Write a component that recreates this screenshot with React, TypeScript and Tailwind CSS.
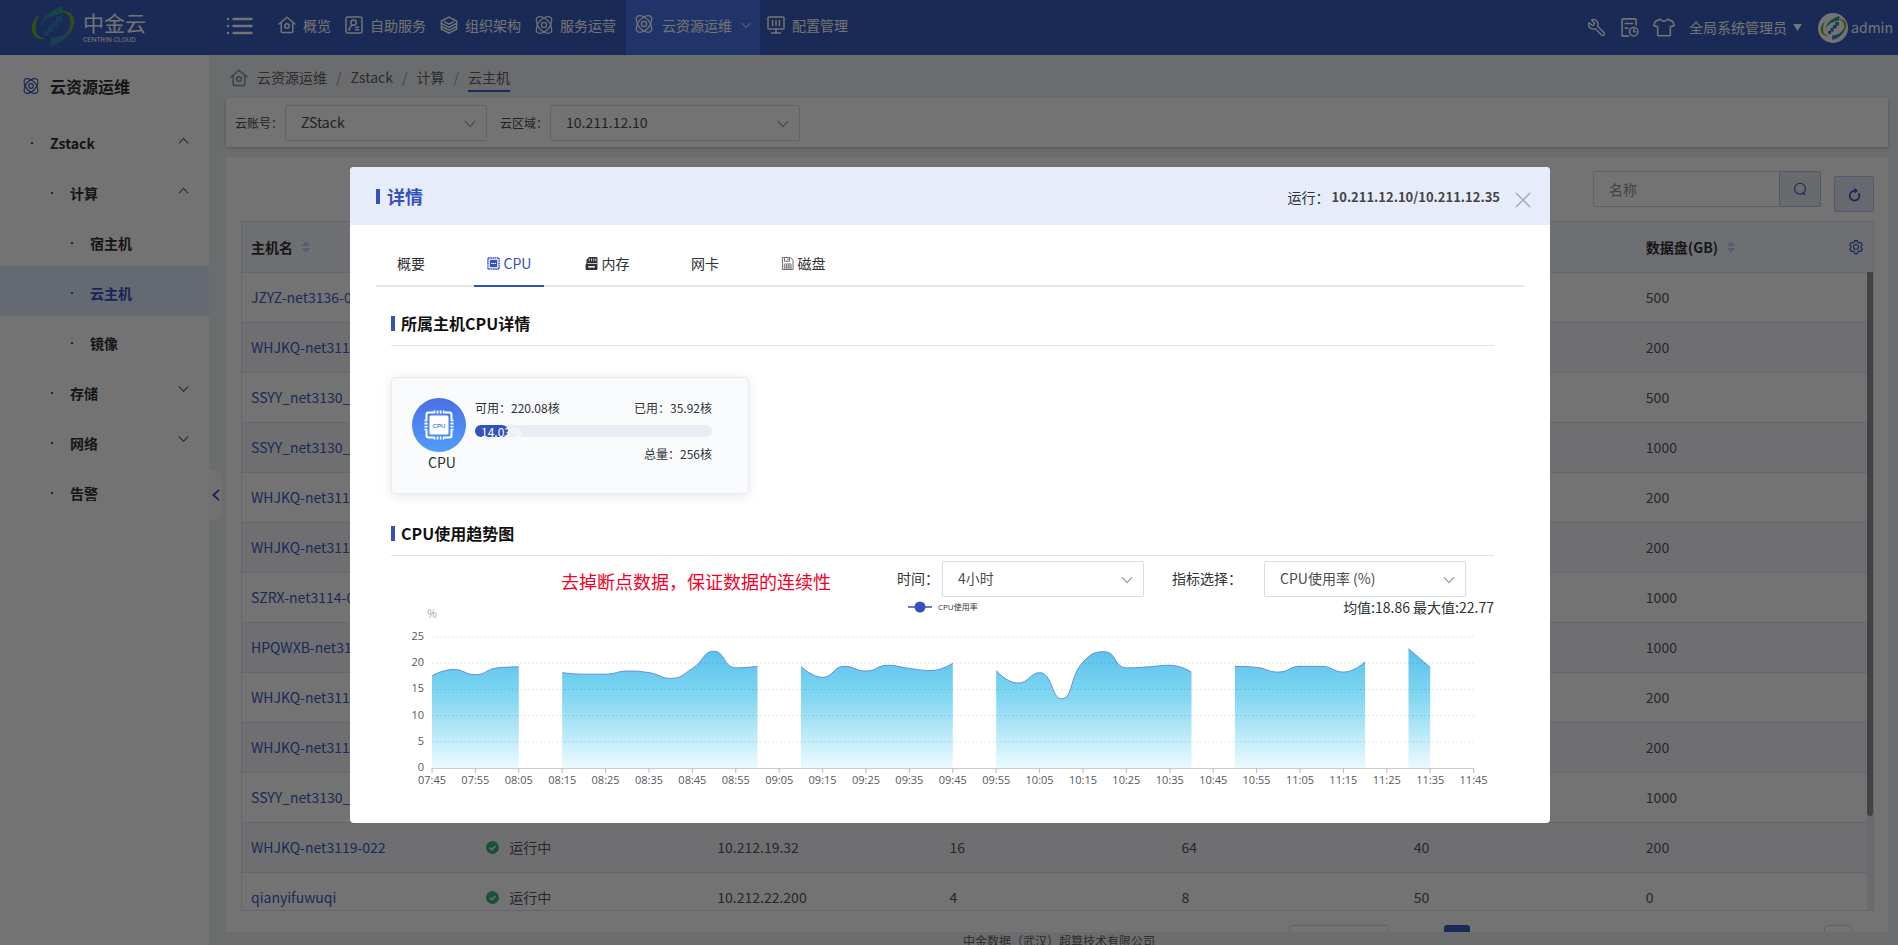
import type { ReactNode } from "react";
import { Wrench } from "lucide-react";

type IconProps = { className?: string };

function Stroke({ className, children, width = 1.5 }: IconProps & { children: ReactNode; width?: number }) {
  return (
    <svg
      viewBox="0 0 18 18"
      className={className}
      fill="none"
      stroke="currentColor"
      strokeWidth={width}
      strokeLinecap="round"
      strokeLinejoin="round"
      aria-hidden="true"
    >
      {children}
    </svg>
  );
}

const HomeIcon = ({ className }: IconProps) => (
  <Stroke className={className}>
    <path d="M1 8 9 1.2 17 8" />
    <path d="M3.2 6.6v9q0 .9.9.9h9.8q.9 0 .9-.9v-9" />
    <circle cx="9" cy="10" r="2.3" />
  </Stroke>
);

const UserCardIcon = ({ className }: IconProps) => (
  <Stroke className={className}>
    <rect x="1" y="1" width="16" height="16" rx="1.6" />
    <circle cx="8.6" cy="6.6" r="2.7" />
    <path d="M4 14.2c.3-2.4 1.7-4.2 3.4-4.8M10.6 11.2h3M10.6 13.8h3" />
  </Stroke>
);

const LayersIcon = ({ className }: IconProps) => (
  <Stroke className={className}>
    <path d="M9 1.2 16.6 5v2.4L9 11.4 1.4 7.4V5z" />
    <path d="M1.4 7.4v3L9 14.2l7.6-3.8v-3M1.4 10.4v2.8L9 17l7.6-3.8v-2.8" />
    <path d="M4.6 5.8 9 8.2l4.4-2.4" />
  </Stroke>
);

const AtomIcon = ({ className }: IconProps) => (
  <Stroke className={className} width={1.3}>
    <path d="M9 2C6.500.6 3.400.4 1.900 1.900S1.400 6.200 2.400 9c-1 2.800-2 5.600-.5 7.100S6.500 17.400 9 16c2.500 1.400 5.600 1.600 7.100.1s.5-4.300-.5-7.100c1-2.800 2-5.600.5-7.100S11.500.6 9 2z" />
    <path d="M9 2C6.200 3.400 3.600 6 2.400 9M15.600 9c-1.200 3-3.800 5.600-6.600 7M2.400 9c1.200 3 3.800 5.600 6.600 7M9 2c2.800 1.400 5.400 4 6.600 7" />
    <circle cx="9" cy="9" r="2.600" />
  </Stroke>
);

const BoardIcon = ({ className }: IconProps) => (
  <Stroke className={className}>
    <rect x="1" y="1" width="16" height="12" rx="1" />
    <path d="M5.600 4.600v5M9 4.600v5M12.400 4.600v5M9 13v4M4.600 17h8.800" />
  </Stroke>
);

const ChevronDown = ({ className }: IconProps) => (
  <svg viewBox="0 0 12 8" className={className} fill="none" stroke="currentColor" strokeWidth="1.2" aria-hidden="true">
    <path d="M1 1.200 6 6.600 11 1.200" />
  </svg>
);

const ChevronUp = ({ className }: IconProps) => (
  <svg viewBox="0 0 12 8" className={className} fill="none" stroke="currentColor" strokeWidth="1.2" aria-hidden="true">
    <path d="M1 6.600 6 1.200 11 6.600" />
  </svg>
);

const SortIcon = () => (
  <svg viewBox="0 0 10 14" className="h-[14px] w-[10px] text-[#c3d4f5]" fill="currentColor" aria-hidden="true">
    <path d="M5 1 9.500 6h-9zM5 13 .500 8h9z" />
  </svg>
);

const LogoMark = ({ className }: IconProps) => (
  <svg viewBox="0 0 44 40" className={className} aria-hidden="true">
    <path d="M32 0C22 3 11 9 8 23c4-9 11-14 23-15z" fill="#2f9c9c" />
    <path d="M9 8C1 14-1 22 2 28c2 4 7 6 13 5C9 32 5 29 5 24 4 18 6 12 9 8z" fill="#6fb52c" />
    <path d="M20 40c11-3 18-9 20-21-4 8-10 13-20 13z" fill="#2f93a8" />
    <path d="M25 5c7-1 14 0 17 5 3 6 0 15-7 22 4-7 6-14 4-20-2-5-7-7-14-7z" fill="#6fb52c" />
    <path d="M25 10h6v6h-4v5h-5v5h-4v4h-5v-5h4v-5h4v-5h4z" fill="#2f7fc0" />
  </svg>
);

const navItems = [
  { label: "概览", Icon: HomeIcon },
  { label: "自助服务", Icon: UserCardIcon },
  { label: "组织架构", Icon: LayersIcon },
  { label: "服务运营", Icon: AtomIcon },
];

function Header() {
  return (
    <header className="flex h-[55px] shrink-0 items-center bg-[#3b5dbf] text-sm text-white">
      <a href="#home" className="flex w-[226px] items-center gap-2 pb-[3px] pl-[31px]">
        <LogoMark className="h-10 w-11" />
        <span className="flex flex-col">
          <span className="text-[21px] leading-7">中金云</span>
          <span className="font-[Roboto] text-[7px] leading-[8px]">CENTRIN CLOUD</span>
        </span>
      </a>
      <button type="button" aria-label="菜单" className="mr-[18px] pb-1">
        <svg viewBox="0 0 26 18" className="h-[18px] w-[27px]" stroke="currentColor" strokeWidth="2.400" strokeLinecap="round" aria-hidden="true">
          <path d="M1.400 2h.1M1.400 9h.1M1.400 16h.1M7 2h18M7 9h18M7 16h18" />
        </svg>
      </button>
      <nav className="flex h-full items-stretch">
        {navItems.map(({ label, Icon }) => (
          <a key={label} href="#nav" className="flex items-center gap-[7px] px-[7px]">
            <Icon className="mb-[6px] h-[18px] w-[18px]" />
            <span className="pb-[5px]">{label}</span>
          </a>
        ))}
        <a href="#nav" className="ml-[3px] flex items-center gap-[9px] bg-[#4a73e8] px-[9px]">
          <AtomIcon className="mb-2 h-[18px] w-[18px]" />
          <span className="pb-[5px]">云资源运维</span>
          <ChevronDown className="mb-1 h-[7px] w-[10px]" />
        </a>
        <a href="#nav" className="flex items-center gap-[7px] px-[7px]">
          <BoardIcon className="mb-[6px] h-[18px] w-[18px]" />
          <span className="pb-[5px]">配置管理</span>
        </a>
      </nav>
      <div className="ml-auto flex items-center gap-[14px] pr-[5px]">
        <button type="button" aria-label="工具">
          <Wrench className="h-[19px] w-[19px] -scale-x-100" strokeWidth={1.8} />
        </button>
        <button type="button" aria-label="日志">
          <Stroke className="h-[19px] w-[19px]">
            <path d="M15.200 6.600V1.600q0-.8-.8-.8H2.800q-.8 0-.8.8v14.800q0 .8.8.8h5.200M5 5.200h7M5 9.600h2.400" />
            <circle cx="13" cy="13" r="4" />
            <path d="M13 10.800V13h1.800" />
          </Stroke>
        </button>
        <button type="button" aria-label="主题">
          <Stroke className="h-[19px] w-[22px]">
            <path d="M5.600 1.200.6 3.400-.6 7.400l3.600 1V16q0 .8.8.8h10.400q.8 0 .8-.8V8.400l3.600-1-1.200-4-5-2.200C11.400 3.600 6.600 3.600 5.600 1.200z" />
          </Stroke>
        </button>
        <button type="button" className="flex items-center gap-[6px]">
          <span className="pb-[2px]">全局系统管理员</span>
          <svg viewBox="0 0 10 8" className="h-[7px] w-[9px]" fill="currentColor" aria-hidden="true">
            <path d="M0 0h10L5 8z" />
          </svg>
        </button>
        <a href="#user" className="ml-[2px] flex items-center gap-[3px]">
          <span className="flex h-[30px] w-[30px] items-center justify-center rounded-full bg-white">
            <LogoMark className="h-[24px] w-[27px]" />
          </span>
          <span className="pb-[2px]">admin</span>
        </a>
      </div>
    </header>
  );
}

type MenuRow = { label: string; pad: string; active?: boolean; arrow?: "up" | "down" };

const menuRows: MenuRow[] = [
  { label: "Zstack", pad: "pl-[31px]", arrow: "up" },
  { label: "计算", pad: "pl-[51px]", arrow: "up" },
  { label: "宿主机", pad: "pl-[71px]" },
  { label: "云主机", pad: "pl-[71px]", active: true },
  { label: "镜像", pad: "pl-[71px]" },
  { label: "存储", pad: "pl-[51px]", arrow: "down" },
  { label: "网络", pad: "pl-[51px]", arrow: "down" },
  { label: "告警", pad: "pl-[51px]" },
];

function Sidebar() {
  return (
    <aside className="relative w-[209px] shrink-0 bg-white text-sm font-bold text-[#303133]">
      <h2 className="flex h-[61px] items-center gap-[11px] pl-[23px] text-base">
        <AtomIcon className="h-4 w-4 text-[#3451bd]" />
        云资源运维
      </h2>
      <ul>
        {menuRows.map(({ label, pad, active, arrow }) => (
          <li key={label}>
            <a
              href="#menu"
              className={`flex h-[50px] items-center pt-1 pr-5 ${pad} ${active ? "bg-[#dfe9fb] text-[#3451bd]" : ""}`}
            >
              <span className="mr-[17px] h-[2px] w-[2px] bg-[#3451bd]" />
              <span className="flex-1">{label}</span>
              {arrow === "up" && <ChevronUp className="mb-1 h-[8px] w-[11px] text-[#606266]" />}
              {arrow === "down" && <ChevronDown className="mb-2 h-[8px] w-[11px] text-[#606266]" />}
            </a>
          </li>
        ))}
      </ul>
      <button
        type="button"
        aria-label="收起"
        className="absolute top-[415px] left-full flex h-[50px] w-[13px] items-center justify-center rounded-r-lg bg-[#fafbfd] text-[#3451bd]"
      >
        <svg viewBox="0 0 8 12" className="h-3 w-2" fill="none" stroke="currentColor" strokeWidth="1.800" aria-hidden="true">
          <path d="M7 .8 1.400 6 7 11.200" />
        </svg>
      </button>
    </aside>
  );
}

type SelectProps = { id: string; value: string; width: string };

function Select({ id, value, width }: SelectProps) {
  return (
    <span className={`relative flex ${width}`}>
      <select
        id={id}
        className="h-9 w-full appearance-none rounded-[2px] border border-[#d8dbea] bg-white pr-8 pb-[2px] pl-[15px] text-sm text-[#4a4c50]"
      >
        <option>{value}</option>
      </select>
      <ChevronDown className="pointer-events-none absolute top-[15px] right-[11px] h-[8px] w-[12px] text-[#9a9ca3]" />
    </span>
  );
}

type HostRow = { name: string; status?: string; ip?: string; cpu?: string; mem?: string; sys?: string; disk: string };

const hosts: HostRow[] = [
  { name: "JZYZ-net3136-0", disk: "500" },
  { name: "WHJKQ-net3119", disk: "200" },
  { name: "SSYY_net3130_", disk: "500" },
  { name: "SSYY_net3130_", disk: "1000" },
  { name: "WHJKQ-net3119", disk: "200" },
  { name: "WHJKQ-net3119", disk: "200" },
  { name: "SZRX-net3114-0", disk: "1000" },
  { name: "HPQWXB-net31", disk: "1000" },
  { name: "WHJKQ-net3119", disk: "200" },
  { name: "WHJKQ-net3119", disk: "200" },
  { name: "SSYY_net3130_", disk: "1000" },
  { name: "WHJKQ-net3119-022", status: "运行中", ip: "10.212.19.32", cpu: "16", mem: "64", sys: "40", disk: "200" },
  { name: "qianyifuwuqi", status: "运行中", ip: "10.212.22.200", cpu: "4", mem: "8", sys: "50", disk: "0" },
];

function HostTable() {
  return (
    <div className="relative min-h-0 flex-1 overflow-hidden border border-[#dfe3f3] bg-[#f3f6fc] pr-[6px]">
      <table className="w-full table-fixed border-collapse bg-white text-left text-sm text-[#55575c]">
        <thead>
          <tr className="h-[50px] border-b border-[#dfe3f3] bg-[#f3f6fc] text-[#333]">
            <th className="pl-[9px]">
              <span className="flex items-center gap-2">
                主机名 <SortIcon />
              </span>
            </th>
            <th />
            <th />
            <th />
            <th />
            <th />
            <th className="pr-[3px] pl-[11px]">
              <span className="flex items-center gap-2">
                数据盘(GB) <SortIcon />
                <button type="button" aria-label="列设置" className="ml-auto text-[#3451bd]">
                  <Stroke className="h-4 w-4" width={1.3}>
                    <path d="M7.400 1h3.200l.5 2 1.400.8 2-.6 1.600 2.800L14.700 7.400v1.700l1.400 1.500-1.600 2.700-2-.5-1.400.8-.5 2H7.400l-.5-2-1.400-.8-2 .5L1.900 10.600l1.400-1.500V7.400L1.900 6l1.600-2.800 2 .6L6.900 3z" transform="translate(0 .8)" />
                    <circle cx="9" cy="9" r="2.800" />
                  </Stroke>
                </button>
              </span>
            </th>
          </tr>
        </thead>
        <tbody>
          {hosts.map((h, i) => (
            <tr key={i} className="h-[50px] border-b border-[#dfe3f3] even:bg-[#f6f7fd]">
              <td className="pl-[9px]">
                <a href="#host" className="text-[#3b5dbf]">
                  {h.name}
                </a>
              </td>
              <td className="pl-[12px]">
                {h.status && (
                  <span className="flex items-center gap-[10px]">
                    <svg viewBox="0 0 14 14" className="h-[13px] w-[13px]" aria-hidden="true">
                      <circle cx="7" cy="7" r="7" fill="#3cb37a" />
                      <path d="m4 7.200 2.200 2.200 4-4" fill="none" stroke="#fff" strokeWidth="1.400" />
                    </svg>
                    {h.status}
                  </span>
                )}
              </td>
              <td className="pl-[11px]">{h.ip}</td>
              <td className="pl-[11px]">{h.cpu}</td>
              <td className="pl-[11px]">{h.mem}</td>
              <td className="pl-[11px]">{h.sys}</td>
              <td className="pl-[11px]">{h.disk}</td>
            </tr>
          ))}
        </tbody>
      </table>
      <div className="absolute top-[50px] right-0 bottom-0 w-[6px] bg-[#eceef3]">
        <div className="h-[544px] rounded-b-sm bg-[#8f9299]" />
      </div>
    </div>
  );
}

function Page() {
  return (
    <main className="flex min-w-0 flex-1 flex-col bg-[#edeff3] pr-[10px] pl-[17px]">
      <nav className="flex h-[43px] shrink-0 items-start gap-[9px] pt-[11px] pl-1 text-sm leading-[22px] text-[#606266]">
        <HomeIcon className="mt-[3px] h-[18px] w-[18px] text-[#8a8d93]" />
        <a href="#crumb">云资源运维</a>
        <span className="text-[#999]">/</span>
        <a href="#crumb">Zstack</a>
        <span className="text-[#999]">/</span>
        <a href="#crumb">计算</a>
        <span className="text-[#999]">/</span>
        <a href="#crumb" className="border-b-2 border-[#3b5dbf] pb-[2px]">
          云主机
        </a>
      </nav>
      <section className="flex h-[49px] shrink-0 items-center bg-white pl-[9px] text-xs whitespace-nowrap text-[#4a4c50] shadow-[0_1px_3px_#b4b9c8]">
        <label htmlFor="account" className="w-[50px]">云账号：</label>
        <Select id="account" value="ZStack" width="w-[202px]" />
        <label htmlFor="region" className="ml-[13px] w-[50px]">云区域：</label>
        <Select id="region" value="10.211.12.10" width="w-[250px]" />
      </section>
      <section className="mt-[10px] flex min-h-0 flex-1 flex-col bg-white pr-[14px] pl-[15px]">
        <div className="flex h-16 shrink-0 items-start justify-end pt-[14px]">
          <input
            type="search"
            aria-label="名称"
            placeholder="名称"
            className="h-9 w-[187px] rounded-l-[2px] border border-[#d3d9ec] px-[15px] text-sm placeholder:text-[#909399]"
          />
          <button
            type="button"
            aria-label="搜索"
            className="-ml-px flex h-9 w-[42px] items-center justify-center rounded-r-[2px] border border-[#b9c8ea] bg-[#e8ecf4] text-[#3b5dbf]"
          >
            <Stroke className="h-[14px] w-[14px]">
              <circle cx="9" cy="8.600" r="7" />
              <path d="m13 13.600 2.400 3" />
            </Stroke>
          </button>
          <button
            type="button"
            aria-label="刷新"
            className="mt-[5px] ml-[13px] flex h-9 w-10 items-center justify-center rounded-[2px] border border-[#b9c8ea] bg-[#e2e9f6] text-[#3451bd]"
          >
            <Stroke className="h-[15px] w-[15px]" width={2}>
              <path d="M9 4.600A5.800 5.800 0 1 0 14.400 8.200" />
              <path d="M9 1v7.200l4-3.600z" fill="currentColor" stroke="none" />
            </Stroke>
          </button>
        </div>
        <HostTable />
        <div className="flex h-[21px] shrink-0 items-start justify-end overflow-hidden pt-[14px] pr-[22px]">
          <span className="h-8 w-[100px] rounded-[3px] border border-[#d8dbea]" />
          <span className="ml-[55px] h-8 w-[26px] rounded-[3px] bg-[#3b5dbf]" />
          <span className="ml-[354px] h-8 w-[28px] rounded-[3px] border border-[#d8dbea]" />
        </div>
      </section>
      <footer className="h-[13px] shrink-0 overflow-hidden pl-1 text-center text-xs leading-[17px] text-[#606266]">
        中金数据（武汉）超算技术有限公司
      </footer>
    </main>
  );
}

type Segment = { start: number; values: number[] };

const segments: Segment[] = [
  { start: 0, values: [17.6, 18.8, 17.8, 19.1, 19.3] },
  { start: 6, values: [18.2, 17.9, 17.9, 18.5, 18.2, 17.1, 19, 22.3, 19.1, 19.4] },
  { start: 17, values: [19.4, 17.3, 19.4, 18.5, 19.6, 19, 18.6, 20] },
  { start: 26, values: [18.6, 16.2, 18.2, 13.2, 20.2, 22.2, 19.1, 19.3, 19.6, 18.3] },
  { start: 37, values: [19.4, 19.2, 18.3, 19.4, 19.4, 18.3, 20.3] },
  { start: 45, values: [22.77, 19.2] },
];

const X0 = 41;
const STEP = 21.7;
const Y0 = 168;
const UNIT = 5.24;

type Point = { x: number; y: number };

const clamp = (v: number, a: number, b: number) => Math.max(Math.min(a, b), Math.min(Math.max(a, b), v));

function smoothPath(pts: Point[]): string {
  let d = `M${pts[0].x} ${pts[0].y}`;
  let c0 = pts[0];
  for (let i = 1; i < pts.length; i++) {
    const prev = pts[i - 1];
    const cur = pts[i];
    const next = pts[i + 1];
    let c1 = cur;
    let nextC0 = cur;
    if (next) {
      const lenPrev = Math.hypot(cur.x - prev.x, cur.y - prev.y);
      const lenNext = Math.hypot(next.x - cur.x, next.y - cur.y);
      const ratio = lenNext / (lenNext + lenPrev);
      const nx = clamp(cur.x + (next.x - prev.x) * 0.5 * ratio, next.x, cur.x);
      const ny = clamp(cur.y + (next.y - prev.y) * 0.5 * ratio, next.y, cur.y);
      c1 = {
        x: clamp(cur.x - ((nx - cur.x) * lenPrev) / lenNext, prev.x, cur.x),
        y: clamp(cur.y - ((ny - cur.y) * lenPrev) / lenNext, prev.y, cur.y),
      };
      nextC0 = {
        x: cur.x + ((cur.x - c1.x) * lenNext) / lenPrev,
        y: cur.y + ((cur.y - c1.y) * lenNext) / lenPrev,
      };
    }
    d += `C${c0.x} ${c0.y} ${c1.x} ${c1.y} ${cur.x} ${cur.y}`;
    c0 = nextC0;
  }
  return d;
}

const timeLabels = Array.from({ length: 25 }, (_, i) => {
  const minutes = 7 * 60 + 45 + i * 10;
  return `${String(Math.floor(minutes / 60)).padStart(2, "0")}:${String(minutes % 60).padStart(2, "0")}`;
});

function TrendChart() {
  return (
    <svg viewBox="0 0 1103 200" className="block w-full overflow-visible font-['Open_Sans','Noto_Sans_CJK_SC',sans-serif]" role="img" aria-label="CPU使用率">
      <defs>
        <linearGradient id="area" gradientUnits="userSpaceOnUse" x1="0" y1="46" x2="0" y2={Y0}>
          <stop offset="0" stopColor="#56bfec" />
          <stop offset="0.400" stopColor="#7fd6f1" />
          <stop offset="1" stopColor="#ecfafe" />
        </linearGradient>
      </defs>
      <line x1="517" x2="541" y1="7" y2="7" stroke="#3451bd" strokeWidth="1.500" />
      <circle cx="529" cy="7" r="5.500" fill="#3451bd" />
      <text x="547" y="10" fontSize="8" fill="#333">CPU使用率</text>
      <text x="41" y="18" textAnchor="middle" fontSize="12" fill="#b0b0b0">%</text>
      {segments.map(({ start, values }) => {
        const pts = values.map((v, i) => ({ x: X0 + (start + i) * STEP, y: Y0 - v * UNIT }));
        const line = smoothPath(pts);
        return (
          <g key={start}>
            <path d={`${line}L${pts[pts.length - 1].x} ${Y0}L${pts[0].x} ${Y0}Z`} fill="url(#area)" />
            <path d={line} fill="none" stroke="#5d8fdc" strokeWidth="1" />
          </g>
        );
      })}
      {[0, 5, 10, 15, 20, 25].map((v) => (
        <g key={v}>
          {v > 0 && (
            <line x1={X0} x2={X0 + 48 * STEP} y1={Y0 - v * UNIT} y2={Y0 - v * UNIT} stroke="#000" strokeOpacity="0.100" strokeDasharray="2 2" />
          )}
          <text x="33" y={Y0 - v * UNIT + 3} textAnchor="end" fontSize="11" fill="#55575c">{v}</text>
        </g>
      ))}
      <line x1={X0} x2={X0 + 48 * STEP} y1={Y0 + 0.5} y2={Y0 + 0.5} stroke="#ccc" />
      {timeLabels.map((t, i) => (
        <g key={t}>
          <line x1={X0 + i * 2 * STEP} x2={X0 + i * 2 * STEP} y1={Y0} y2={Y0 + 5} stroke="#bbb" />
          <text x={X0 + i * 2 * STEP} y={Y0 + 16} textAnchor="middle" fontSize="11" fill="#55575c">{t}</text>
        </g>
      ))}
    </svg>
  );
}

const ChipTabIcon = () => (
  <svg viewBox="0 0 14 14" className="h-[13px] w-[13px]" fill="none" stroke="currentColor" aria-hidden="true">
    <rect x="1" y="1" width="12" height="12" strokeWidth="1.600" strokeDasharray="1.800 .6" />
    <rect x="3" y="3" width="8" height="8" fill="currentColor" stroke="none" />
    <path d="M4.400 7h5.200" stroke="#fff" strokeWidth="1.200" strokeDasharray="1.400 .5" />
  </svg>
);

const MemoryTabIcon = () => (
  <svg viewBox="0 0 14 14" className="h-[13px] w-[13px]" aria-hidden="true">
    <path d="M4.400 0h8q1 0 1 1v12q0 1-1 1H1.600q-1 0-1-1V8l1-1V3z" fill="#303133" />
    <path d="M4.600 1.500v3M7 1.500v3M9.400 1.500v3M11.600 1.500v3" stroke="#fff" strokeWidth=".8" />
    <path d="M2.600 7h10.800" stroke="#fff" strokeWidth=".8" />
    <path d="M3.400 9.800h7.200v1.600H3.400z" fill="#fff" />
  </svg>
);

const DiskTabIcon = () => (
  <svg viewBox="0 0 14 14" className="h-[13px] w-[13px]" fill="none" stroke="#606266" aria-hidden="true">
    <path d="M1.500.5h8.500l3 3v10H1.500zM3.800.5v4h5.400v-4M7.400 1.500v2" />
    <path d="M3.500 7.500h7.400v6H3.500zM3.500 9.500h7.400M3.500 11.500h7.400M6 7.500v6M8.500 7.500v6" strokeWidth=".8" />
  </svg>
);

const tabs: { label: string; icon?: ReactNode; active?: boolean }[] = [
  { label: "概要" },
  { label: "CPU", icon: <ChipTabIcon />, active: true },
  { label: "内存", icon: <MemoryTabIcon /> },
  { label: "网卡" },
  { label: "磁盘", icon: <DiskTabIcon /> },
];

function SectionTitle({ children }: { children: ReactNode }) {
  return (
    <h4 className="flex h-[45px] items-center gap-[6px] border-b border-[#e1e4ea] text-base font-bold text-[#111]">
      <span className="h-[15px] w-1 bg-[#3451bd]" />
      {children}
    </h4>
  );
}

function CpuCard() {
  return (
    <div className="mt-[31px] flex h-[117px] w-[358px] rounded border border-[#e6eaf3] bg-[#f8fafc] pr-[36px] pl-5 text-xs leading-[18px] text-[#303133] shadow-[0_2px_12px_rgba(0,0,0,0.1)]">
      <div className="flex w-[63px] shrink-0 flex-col items-start pt-5">
        <span className="flex h-[54px] w-[54px] items-center justify-center rounded-full bg-linear-to-b from-[#4a6fe6] to-[#4f9df9]">
          <svg viewBox="0 0 30 30" className="h-[30px] w-[30px]" aria-hidden="true">
            <rect x="2.500" y="2.500" width="25" height="25" rx="2" fill="none" stroke="#fff" strokeWidth="2" />
            <path d="M9.500 2.500h11M9.500 27.500h11M2.500 9.500v11M27.500 9.500v11" stroke="#4b86f0" strokeWidth="3" />
            <path d="M9.500 2h12M9.500 28h12M2 9.500v12M28 9.500v12" stroke="#fff" strokeWidth="3" strokeDasharray="1.800 1.300" />
            <rect x="5.500" y="5.500" width="19" height="19" rx="1.500" fill="#fff" />
            <text x="15" y="17.500" textAnchor="middle" fontSize="6" fontWeight="700" fill="#4b86f0" fontFamily="Liberation Sans">CPU</text>
          </svg>
        </span>
        <span className="w-[60px] text-center text-sm leading-[21px]">CPU</span>
      </div>
      <div className="flex-1 pt-[21px]">
        <p className="flex justify-between">
          <span>可用：220.08核</span>
          <span>已用：35.92核</span>
        </p>
        <div className="mt-2 h-3 rounded-full bg-[#e9ecf3]">
          <div className="flex h-3 w-[14%] items-center rounded-full bg-[#3451bd] pt-[2px] pl-[6px] whitespace-nowrap text-white">
            14.03%
          </div>
        </div>
        <p className="mt-2 text-right">总量：256核</p>
      </div>
    </div>
  );
}

function DetailModal() {
  return (
    <div className="absolute inset-0 bg-black/55 pt-[167px] pr-4 pl-[18px]">
      <div role="dialog" aria-label="详情" className="mx-auto w-full max-w-[1200px] rounded bg-white pb-[23px] text-sm text-[#303133]">
        <div className="flex h-[58px] items-center rounded-t bg-[#e7ecfb] pr-[18px] pl-[26px]">
          <span className="mr-[7px] h-[15px] w-1 bg-[#3451bd]" />
          <h3 className="flex-1 text-lg font-bold text-[#3451bd]">详情</h3>
          <span className="mr-[2px] pt-[2px]">运行：</span>
          <span className="mr-[14px] pt-[3px] text-[13px] font-bold text-[#444]">10.211.12.10/10.211.12.35</span>
          <button type="button" aria-label="关闭">
            <svg viewBox="0 0 18 18" className="mt-2 h-[18px] w-[18px]" stroke="#aaa9ae" strokeWidth="1.500" aria-hidden="true">
              <path d="m2 2 14 14M16 2 2 16" />
            </svg>
          </button>
        </div>
        <div role="tablist" className="mx-[26px] mt-4 flex gap-7 border-b-2 border-[#e1e4ea]">
          {tabs.map(({ label, icon, active }) => (
            <button
              key={label}
              type="button"
              role="tab"
              aria-selected={!!active}
              className={`-mb-[2px] flex h-[46px] w-[70px] items-center justify-center gap-1 border-b-2 ${
                active ? "border-[#3451bd] text-[#3451bd]" : "border-transparent"
              }`}
            >
              {icon}
              {label}
            </button>
          ))}
        </div>
        <div className="pr-[56px] pl-[41px]">
          <div className="pt-[14px]">
            <SectionTitle>所属主机CPU详情</SectionTitle>
          </div>
          <CpuCard />
          <div className="pt-[17px]">
            <SectionTitle>CPU使用趋势图</SectionTitle>
          </div>
          <div className="flex items-center justify-end pt-[5px] pr-7">
            <p className="mr-[66px] pt-[3px] text-lg leading-6 text-[#f5002a]">去掉断点数据，保证数据的连续性</p>
            <label htmlFor="period" className="w-[45px] pb-[2px]">时间：</label>
            <Select id="period" value="4小时" width="w-[202px]" />
            <label htmlFor="metric" className="ml-7 w-[92px] pb-[2px]">指标选择：</label>
            <Select id="metric" value="CPU使用率 (%)" width="w-[202px]" />
          </div>
          <div className="relative pt-[3px]">
            <p className="absolute top-0 right-0 leading-[21px]">均值:18.86 最大值:22.77</p>
            <TrendChart />
          </div>
        </div>
      </div>
    </div>
  );
}

export default function App() {
  return (
    <div className="relative flex h-screen flex-col overflow-hidden font-['Noto_Sans_CJK_SC',sans-serif]">
      <Header />
      <div className="flex min-h-0 flex-1">
        <Sidebar />
        <Page />
      </div>
      <DetailModal />
    </div>
  );
}
